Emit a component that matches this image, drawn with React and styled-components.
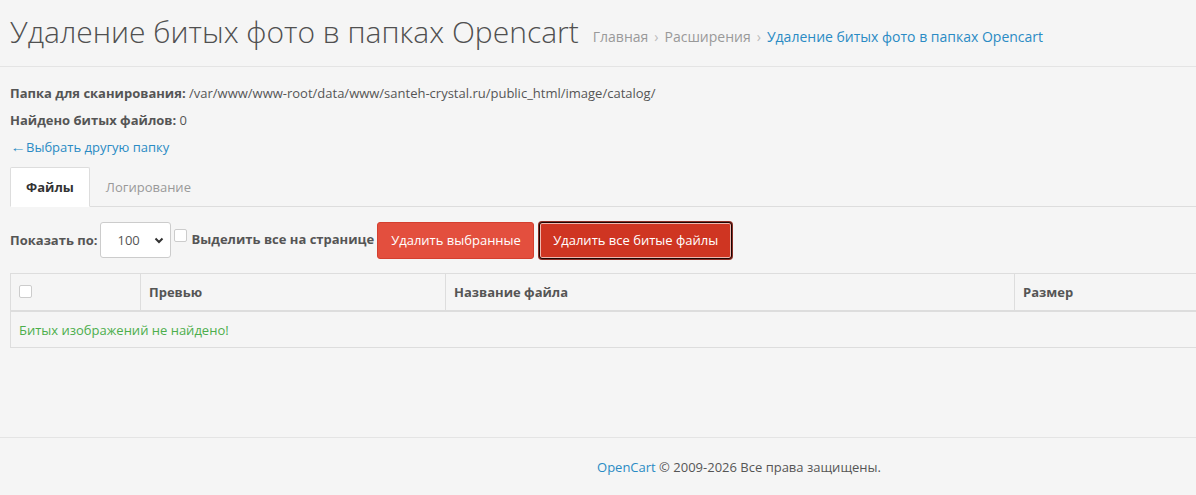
import React from 'react';
import styled, { createGlobalStyle } from 'styled-components';

const GlobalStyle = createGlobalStyle`
  html, body {
    margin: 0;
    padding: 0;
    background: #f5f5f5;
    overflow: hidden;
  }
  body {
    font-family: "Open Sans", "Noto Sans", sans-serif;
    font-size: 13px;
    color: #555;
  }
`;

const Page = styled.div`
  width: 1196px;
  min-height: 495px;
  display: flex;
  flex-direction: column;
`;

const Header = styled.div`
  height: 67px;
  border-bottom: 1px solid #e4e4e4;
  display: flex;
  align-items: center;
  padding: 0 10px;
  box-sizing: border-box;
`;

const Title = styled.h1`
  margin: 0 14px 0 0;
  font-size: 30px;
  font-weight: 300;
  color: #505050;
  line-height: 1;
  position: relative;
  top: -1px;
`;

const Breadcrumb = styled.ul`
  list-style: none;
  margin: 6px 0 0;
  padding: 0;
  display: flex;
  font-size: 14px;
`;

const Crumb = styled.li`
  color: ${(p) => (p.$active ? '#2a8bc4' : '#999')};
  &:not(:first-child)::before {
    content: '›';
    color: #bbb;
    margin: 0 6px;
  }
`;

const Content = styled.div`
  padding: 13px 10px 0;
`;

const Line = styled.div`
  line-height: 27px;
  color: #555;
  b {
    font-weight: 700;
  }
`;

const BackLink = styled.a`
  display: block;
  line-height: 27px;
  color: #2a8bc4;
  text-decoration: none;
`;

const Arrow = styled.span`
  display: inline-block;
  transform: scaleX(1.2);
  transform-origin: left center;
  margin-right: 3px;
`;

const Tabs = styled.div`
  display: flex;
  margin-top: 6px;
  border-bottom: 1px solid #ddd;
  margin-right: -10px;
`;

const Tab = styled.div`
  height: 38px;
  display: flex;
  align-items: center;
  padding: 0 15px;
  margin-bottom: -1px;
  font-weight: ${(p) => (p.$active ? 700 : 400)};
  color: ${(p) => (p.$active ? '#333' : '#999')};
  background: ${(p) => (p.$active ? '#fff' : 'transparent')};
  border: 1px solid ${(p) => (p.$active ? '#ddd' : 'transparent')};
  border-bottom-color: ${(p) => (p.$active ? '#fff' : 'transparent')};
  border-radius: 2px 2px 0 0;
`;

const Toolbar = styled.div`
  display: flex;
  align-items: center;
  margin-top: 14px;
  height: 38px;
`;

const Label = styled.span`
  font-weight: 700;
  color: #555;
`;

const Select = styled.div`
  width: 71px;
  height: 36px;
  box-sizing: border-box;
  margin-left: 3px;
  border: 1px solid #ccc;
  border-radius: 3px;
  background: #fff;
  display: flex;
  align-items: center;
  padding: 0 6px 0 16px;
  justify-content: space-between;
  color: #555;
  font-size: 13px;
`;

const Check = styled.span`
  display: inline-block;
  width: 11px;
  height: 11px;
  border: 1px solid #ccc;
  border-radius: 2px;
  background: #fff;
`;

const CheckLabel = styled.label`
  display: flex;
  align-items: flex-start;
  gap: 4px;
  margin-left: 3px;
  font-weight: 700;
  color: #555;
  align-self: flex-start;
  margin-top: 8px;
  span:last-child {
    margin-top: 1px;
  }
`;

const Button = styled.button`
  font-family: inherit;
  font-size: 13px;
  white-space: nowrap;
  color: #fff;
  height: 37px;
  padding: 0 13px;
  border-radius: 3px;
  cursor: pointer;
  margin-left: ${(p) => p.$ml || 0}px;
  background: ${(p) => (p.$focused ? '#cf3522' : '#e34f3e')};
  border: 1px solid ${(p) => (p.$focused ? '#1a0503' : '#d43f2f')};
  box-shadow: ${(p) =>
    p.$focused ? '0 0 0 1px #8a3027, inset 0 0 0 1px #f0b8b0' : 'none'};
  width: ${(p) => p.$w}px;
`;

const Table = styled.div`
  margin-top: 14px;
  margin-right: -30px;
  border: 1px solid #ddd;
  background: #f5f5f5;
`;

const Row = styled.div`
  display: grid;
  grid-template-columns: 129px 305px 569px 1fr;
  height: 36px;
  border-bottom: 2px solid #ddd;
`;

const Cell = styled.div`
  display: flex;
  align-items: center;
  padding: 0 8px;
  font-weight: 700;
  color: #555;
  border-left: ${(p) => (p.$first ? 'none' : '1px solid #ddd')};
`;

const HeadCheck = styled(Check)`
  align-self: flex-start;
  margin-top: 11px;
`;

const EmptyCell = styled.div`
  display: flex;
  align-items: center;
  padding: 0 8px;
  color: #4cae4c;
  height: 35px;
`;

const Footer = styled.footer`
  margin-top: auto;
  border-top: 1px solid #e4e4e4;
  height: 57px;
  display: flex;
  align-items: center;
  justify-content: center;
  padding-left: 282px;
  color: #555;
  a {
    color: #2a8bc4;
    text-decoration: none;
  }
`;

function Chevron() {
  return (
    <svg width="10" height="7" viewBox="0 0 10 7">
      <path d="M1.5 1.5 L5 5 L8.5 1.5" fill="none" stroke="#333" strokeWidth="2" />
    </svg>
  );
}

export default function App() {
  return (
    <Page>
      <GlobalStyle />
      <Header>
        <Title>Удаление битых фото в папках Opencart</Title>
        <Breadcrumb>
          <Crumb>Главная</Crumb>
          <Crumb>Расширения</Crumb>
          <Crumb $active>Удаление битых фото в папках Opencart</Crumb>
        </Breadcrumb>
      </Header>
      <Content>
        <Line>
          <b>Папка для сканирования:</b> /var/www/www-root/data/www/santeh-crystal.ru/public_html/image/catalog/
        </Line>
        <Line>
          <b>Найдено битых файлов:</b> 0
        </Line>
        <BackLink href="#">
          <Arrow>←</Arrow>Выбрать другую папку
        </BackLink>
        <Tabs>
          <Tab $active>Файлы</Tab>
          <Tab>Логирование</Tab>
        </Tabs>
        <Toolbar>
          <Label>Показать по:</Label>
          <Select>
            <span>100</span>
            <Chevron />
          </Select>
          <CheckLabel>
            <Check />
            <span>Выделить все на странице</span>
          </CheckLabel>
          <Button $ml={3} $w={157}>Удалить выбранные</Button>
          <Button $ml={5} $w={193} $focused>Удалить все битые файлы</Button>
        </Toolbar>
        <Table>
          <Row>
            <Cell $first>
              <HeadCheck />
            </Cell>
            <Cell>Превью</Cell>
            <Cell>Название файла</Cell>
            <Cell>Размер</Cell>
          </Row>
          <EmptyCell>Битых изображений не найдено!</EmptyCell>
        </Table>
      </Content>
      <Footer>
        <span>
          <a href="#">OpenCart</a> © 2009-2026 Все права защищены.
        </span>
      </Footer>
    </Page>
  );
}
